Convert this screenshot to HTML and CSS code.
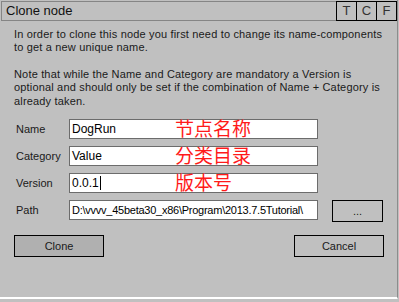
FILE: index.html
```html
<!DOCTYPE html>
<html lang="en">
<head>
  <meta charset="UTF-8" />
  <title>Clone node</title>
  <link rel="stylesheet" href="styles.css">
</head>
<body>
  <div class="window">
    <div class="titlebar">
      <div class="title">Clone node</div>
      <div class="tbtn">T</div>
      <div class="tbtn">C</div>
      <div class="tbtn">F</div>
    </div>

    <div class="content">
      <p class="info">In order to clone this node you first need to change its name-components<br>to get a new unique name.</p>
      <p class="info">Note that while the Name and Category are mandatory a Version is<br>optional and should only be set if the combination of Name + Category is<br>already taken.</p>

      <div class="form">
        <label>Name</label>
        <div class="field">
          <div class="input">DogRun</div>
          <span class="note">节点名称</span>
        </div>
        <div></div>

        <label>Category</label>
        <div class="field">
          <div class="input">Value</div>
          <span class="note">分类目录</span>
        </div>
        <div></div>

        <label>Version</label>
        <div class="field">
          <div class="input">0.0.1<span class="caret"></span></div>
          <span class="note">版本号</span>
        </div>
        <div></div>

        <label>Path</label>
        <div class="field">
          <div class="input path">D:\vvvv_45beta30_x86\Program\2013.7.5Tutorial\</div>
        </div>
        <button class="btn browse">...</button>
      </div>

      <div class="actions">
        <button class="btn primary">Clone</button>
        <button class="btn">Cancel</button>
      </div>
    </div>
  </div>
</body>
</html>
```

FILE: styles.css
```css
* {
  box-sizing: border-box;
}

body {
  margin: 0;
  background: #c0c0c0;
  font-family: 'Liberation Sans', Arial, sans-serif;
  color: #1a1a1a;
}

.window {
  width: 398px;
  height: 299px;
  border-right: 1px solid #8c8c8c;
  border-bottom: 2px solid #ffffff;
  background: #c0c0c0;
}

.titlebar {
  display: flex;
  height: 21px;
  padding: 1px 0 0 1px;
}

.title {
  flex: 1;
  border: 1px solid #858585;
  border-right: none;
  font-size: 13px;
  line-height: 18px;
  padding-left: 4px;
  color: #111;
}

.tbtn {
  width: 21px;
  border: 1px solid #000;
  margin-left: -1px;
  text-align: center;
  font-size: 13px;
  line-height: 18px;
  color: #333;
}

.tbtn:first-of-type {
  margin-left: 0;
}

.content {
  padding: 7px 14px 0 14px;
}

.info {
  margin: 0 0 13px;
  font-size: 11px;
  line-height: 13.4px;
  letter-spacing: 0.17px;
  white-space: nowrap;
}

.form {
  display: grid;
  grid-template-columns: 55px 249px 65px;
  row-gap: 7px;
  align-items: start;
  margin-top: -2px;
}

.form label {
  font-size: 11px;
  line-height: 20px;
  padding-left: 2px;
}

.field {
  position: relative;
}

.input {
  height: 20px;
  border: 1px solid #6c6c6c;
  background: #fff;
  font-size: 12px;
  line-height: 18px;
  padding-left: 2px;
  white-space: nowrap;
  overflow: hidden;
  color: #000;
}

.input.path {
  font-size: 11px;
  letter-spacing: -0.25px;
}

.caret {
  display: inline-block;
  width: 1px;
  height: 14px;
  background: #000;
  vertical-align: -3px;
  margin-left: 1px;
}

.note {
  position: absolute;
  left: 106px;
  top: -3px;
  font-family: 'Noto Sans CJK SC', sans-serif;
  font-size: 19px;
  line-height: 24px;
  color: #ff1a1a;
  white-space: nowrap;
}

.btn {
  height: 22px;
  width: 90px;
  border: 1px solid #000;
  background: #c0c0c0;
  font-family: 'Liberation Sans', Arial, sans-serif;
  font-size: 11px;
  color: #1a1a1a;
  padding: 0;
}

.browse {
  width: 51px;
  margin-left: 14px;
}

.btn.primary {
  background: #b0b0b0;
}

.actions {
  display: flex;
  justify-content: space-between;
  width: 370px;
  margin-top: 13px;
}
```
